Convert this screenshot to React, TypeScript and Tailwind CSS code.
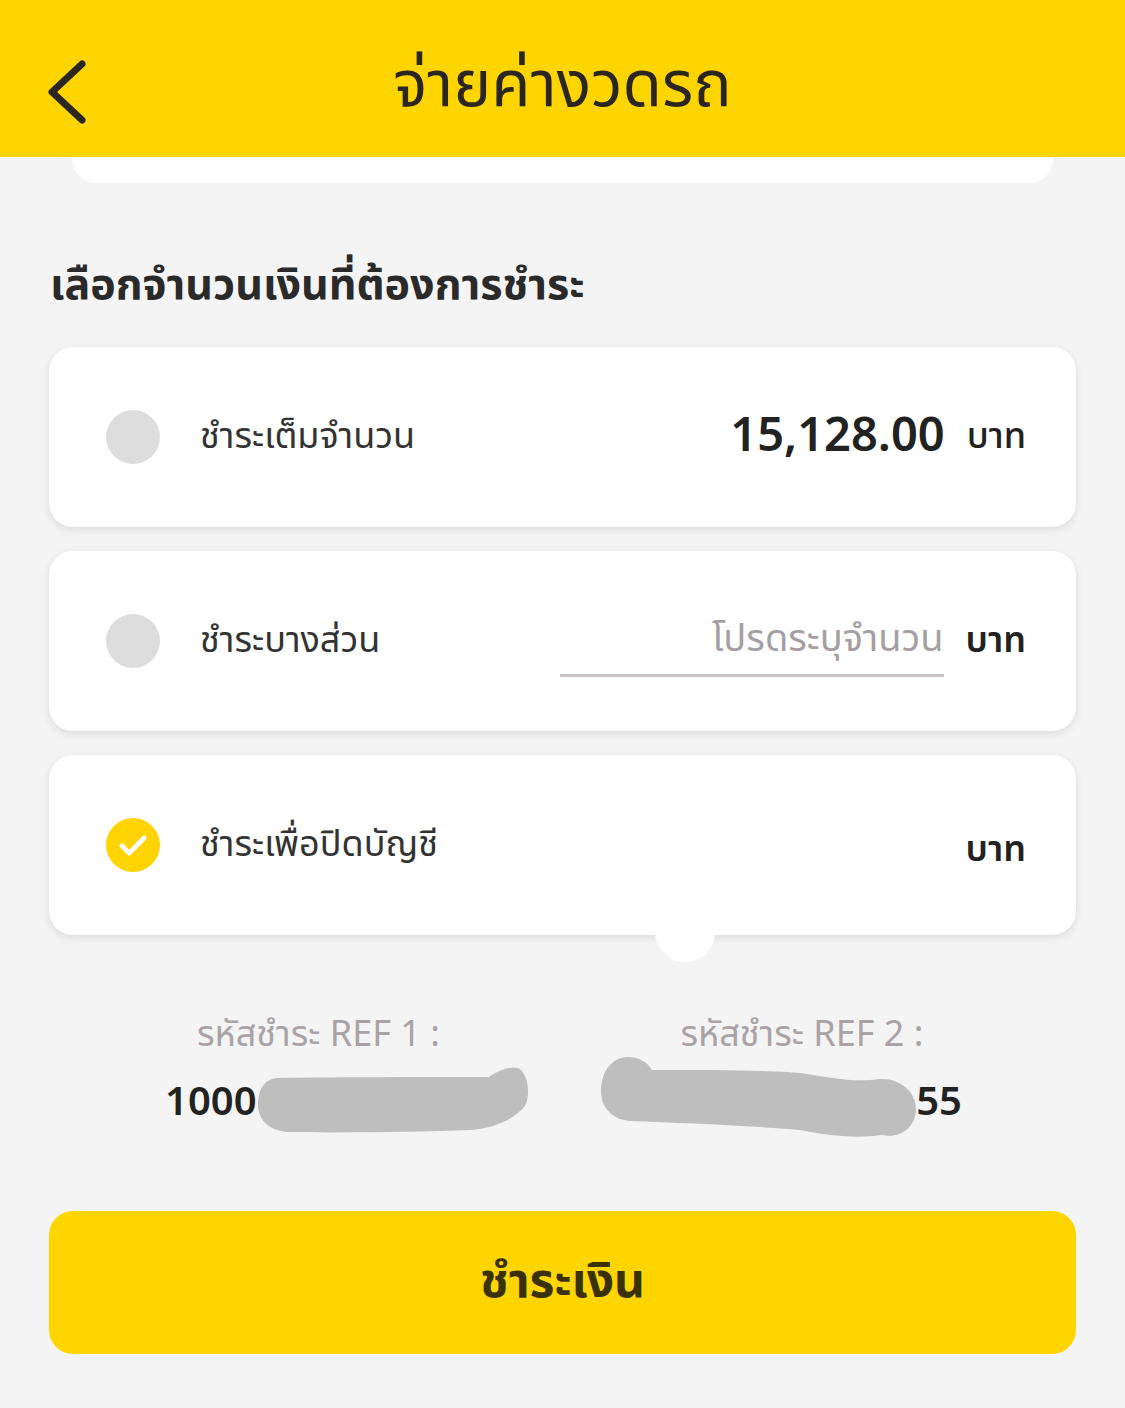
import React from "react";

const font = { fontFamily: "'Noto Sans Thai', 'Noto Sans', 'DejaVu Sans', sans-serif" };

function Radio({ checked }: { checked?: boolean }) {
  if (checked) {
    return (
      <span className="flex h-[54px] w-[54px] shrink-0 items-center justify-center rounded-full bg-[#ffd400]">
        <svg viewBox="0 0 24 24" className="h-[38px] w-[38px]" fill="none" stroke="#fff" strokeWidth="3" strokeLinecap="round" strokeLinejoin="round">
          <path d="M5 12.5l4.6 4.6L19 7.6" />
        </svg>
      </span>
    );
  }
  return <span className="h-[54px] w-[54px] shrink-0 rounded-full bg-[#dddddd]" />;
}

function Card({ children }: { children: React.ReactNode }) {
  return (
    <div className="flex h-[180px] items-center rounded-[24px] bg-white pl-[57px] pr-[50px] shadow-[0_3px_8px_rgba(0,0,0,0.10)]">
      {children}
    </div>
  );
}

export default function App() {
  return (
    <div className="min-h-[1408px] w-[1125px] bg-[#f4f4f4]" style={font}>
      <header className="relative flex h-[157px] items-center justify-center bg-[#ffd500]">
        <button className="absolute left-[44px] top-[58px]">
          <svg viewBox="0 0 44 68" className="h-[68px] w-[44px]" fill="none" stroke="#2b2620" strokeWidth="7" strokeLinecap="round" strokeLinejoin="round">
            <path d="M38 6L8 34l30 28" />
          </svg>
        </button>
        <h1 className="mt-[16px] text-[64px] leading-none text-[#2b2620]">จ่ายค่างวดรถ</h1>
      </header>

      <div className="mx-[72px] h-[26px] rounded-b-[24px] bg-white" />

      <h2 className="mt-[81px] px-[50px] text-[43px] font-bold leading-none text-[#2a2a2a]">เลือกจำนวนเงินที่ต้องการชำระ</h2>

      <div className="mt-[40px] flex flex-col gap-[24px] px-[49px]">
        <Card>
          <Radio />
          <span className="ml-[40px] text-[36px] text-[#333]">ชำระเต็มจำนวน</span>
          <span className="ml-auto text-[47px] font-semibold text-[#222]">15,128.00</span>
          <span className="ml-[22px] text-[36px] font-medium text-[#222]">บาท</span>
        </Card>
        <Card>
          <Radio />
          <span className="ml-[40px] text-[36px] text-[#333]">ชำระบางส่วน</span>
          <div className="ml-auto flex h-[72px] w-[384px] items-center justify-end border-b-[3px] border-[#c8c4c6]">
            <span className="text-[38px] text-[#a59fa3]">โปรดระบุจำนวน</span>
          </div>
          <span className="ml-[22px] text-[36px] font-semibold text-[#222]">บาท</span>
        </Card>
        <div className="relative">
          <Card>
            <Radio checked />
            <span className="ml-[40px] text-[36px] text-[#333]">ชำระเพื่อปิดบัญชี</span>
            <span className="ml-auto mt-[10px] text-[36px] font-semibold text-[#222]">บาท</span>
          </Card>
          <span className="absolute left-[606px] top-[160px] h-[47px] w-[60px] rounded-b-full bg-white" />
        </div>
      </div>

      <div className="mt-[82px] grid grid-cols-2 px-[49px]">
        <div className="relative">
          <p className="pl-[148px] text-[36px] leading-none text-[#a9a3a6]">รหัสชำระ REF 1 :</p>
          <p className="mt-[30px] pl-[116px] text-[40px] font-semibold leading-none text-[#222]">1000<span className="text-transparent">12345678</span></p>
          <svg className="absolute left-[208px] top-[49px]" width="275" height="68" viewBox="0 0 275 68">
            <path d="M20 12 C80 11 180 11 232 11 C245 2 258 -1 264 4 C272 12 273 30 268 40 C258 52 240 62 215 64 C160 66 80 67 30 66 C8 64 0 50 1 36 C2 22 8 13 20 12 Z" fill="#bebebe" />
          </svg>
        </div>
        <div className="relative">
          <p className="pl-[118px] text-[36px] leading-none text-[#a9a3a6]">รหัสชำระ REF 2 :</p>
          <p className="mt-[30px] pr-[114px] text-right text-[40px] font-semibold leading-none text-[#222]"><span className="text-transparent">12345678</span>55</p>
          <svg className="absolute left-[37px] top-[40px]" width="318" height="82" viewBox="0 0 318 82">
            <path d="M28 0 C40 0 48 6 52 13 C110 13 170 13 200 16 C230 20 250 26 280 22 C300 21 316 35 316 52 C316 70 300 82 282 78 C255 82 225 78 200 73 C140 68 80 66 30 64 C10 62 0 48 1 32 C2 14 12 0 28 0 Z" fill="#bebebe" />
          </svg>
        </div>
      </div>

      <div className="mt-[88px] px-[49px]">
        <button className="flex h-[143px] w-full items-center justify-center rounded-[24px] bg-[#ffd500] text-[48px] font-bold text-[#3a3206]">
          ชำระเงิน
        </button>
      </div>
    </div>
  );
}
